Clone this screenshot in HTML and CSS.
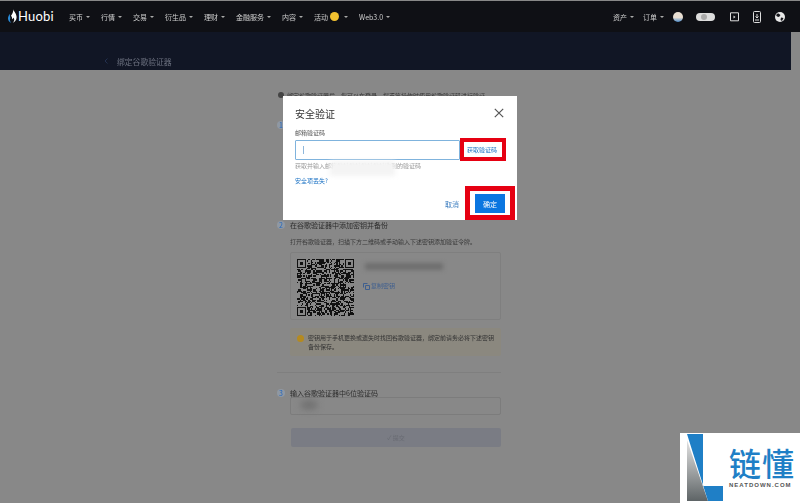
FILE: index.html
```html
<!DOCTYPE html>
<html lang="zh-CN">
<head>
<meta charset="utf-8">
<title>绑定谷歌验证器</title>
<link rel="stylesheet" href="styles.css">
</head>
<body>
<header class="nav">
  <div class="brand">
    <svg class="flame" width="9" height="14" viewBox="0 0 9 14"><path fill="#fff" d="M5 0c.6 2.4 3.6 4.300 3.600 8.300 0 2.800-1.800 4.900-3.800 5.500 1.600-1.300 1.900-3.400.8-5.200-.4 1-1 1.400-1.600 1.700.3-1.500-.2-2.800-1-3.600C4.800 4.300 5.600 2.400 5 0z"/><path fill="#2a8bd8" d="M2.200 4.800C.8 6.300 0 7.700 0 9.500c0 2.200 1.500 3.800 3.300 4.300C1.900 12.500 1.500 10.800 2.400 9 1.800 7.500 1.700 6.200 2.200 4.800z"/></svg>
    <span class="brand-name">Huobi</span>
  </div>
  <nav class="menu">
    <a class="m">买币</a><a class="m">行情</a><a class="m">交易</a><a class="m">衍生品</a><a class="m">理财</a><a class="m">金融服务</a><a class="m">内容</a>
    <a class="m m-activity">活动<i class="coin"></i></a><a class="m">Web3.0</a>
  </nav>
  <div class="nav-right">
    <a class="m">资产</a><a class="m">订单</a>
    <i class="avatar"></i>
    <i class="toggle"><b></b></i>
    <svg class="ico" width="10" height="10" viewBox="0 0 10 10"><path fill="none" stroke="#ddd" d="M1.500.8h8v8h-8z"/><path fill="#ddd" d="M4.500 3.500 6.500 5 4.500 6.500z"/></svg>
    <svg class="ico" width="8" height="12" viewBox="0 0 8 12"><rect x=".5" y=".5" width="7" height="11" rx="1" fill="none" stroke="#ddd"/><path stroke="#ddd" fill="none" d="M4 3v4M2.500 5.500 4 7l1.500-1.500M2 9h4"/></svg>
    <svg class="ico" width="10" height="10" viewBox="0 0 10 10"><circle cx="5" cy="5" r="5" fill="#e8e8e8"/><path fill="#15161b" d="M3 1.200 5.500 3 4 5 2 4.500 1 3zM6 5.500 8.500 6 7 9 5.500 8z"/></svg>
  </div>
</header>

<div class="banner"><svg class="banner-arrow" width="4" height="6" viewBox="0 0 4 6"><path fill="none" stroke="#23304f" d="M3.500.5 1 3l2.500 2.500"/></svg><span class="banner-title">绑定谷歌验证器</span></div>

<main class="content">
  <p class="tip"><i class="dot"></i>绑定谷歌验证器后，您可以在登录、提币等操作时使用谷歌验证码进行验证。</p>
  <h2 class="step step-one"><i class="num">1</i></h2>
  <h2 class="step step-two"><i class="num">2</i>在谷歌验证器中添加密钥并备份</h2>
  <p class="desc">打开谷歌验证器，扫描下方二维码或手动输入下述密钥添加验证令牌。</p>
  <section class="card">
    <svg id="qr" class="qr" width="57" height="57" viewBox="0 0 45 45" shape-rendering="crispEdges"></svg>
    <div class="secret">
      <div class="secret-key"></div>
      <a class="copy"><svg width="7" height="7" viewBox="0 0 7 7"><path fill="none" stroke="#3f5f8f" d="M2.500 2.500h4v4h-4zM.5 4.500v-4h4"/></svg>复制密钥</a>
    </div>
  </section>
  <section class="warn"><i class="warn-dot"></i><p>密钥用于手机更换或遗失时找回谷歌验证器，绑定前请务必将下述密钥备份保存。</p></section>
  <hr class="rule">
  <h2 class="step step-three"><i class="num">3</i>输入谷歌验证器中6位验证码</h2>
  <div class="code-input"><i class="smudge"></i></div>
  <div class="submit">✓ 提交</div>
</main>

<div class="modal">
  <div class="modal-head"><span class="modal-title">安全验证</span>
    <svg class="close" width="10" height="10" viewBox="0 0 10 10"><path stroke="#555" stroke-width="1.200" d="M.8.8l8.400 8.400M9.200.8.800 9.200"/></svg>
  </div>
  <label class="label">邮箱验证码</label>
  <div class="field"><i class="caret"></i><a class="get-code">获取验证码</a></div>
  <p class="hint">获取并输入邮箱地址地址地址地址收到的验证码</p>
  <a class="lost">安全项丢失?</a>
  <div class="actions"><a class="cancel">取消</a><button class="ok">确定</button></div>
  <i class="patch"></i>
  <i class="mark mark-code"></i>
  <i class="mark mark-ok"></i>
</div>

<aside class="watermark">
  <svg class="wm-logo" width="37" height="68" viewBox="0 0 37 68">
    <defs><linearGradient id="wmg" x1="0" y1="0" x2="0" y2="1"><stop offset="0" stop-color="#e4e4e4"/><stop offset="1" stop-color="#5e6466"/></linearGradient></defs>
    <path fill="url(#wmg)" d="M0 6 0 67H21z"/>
    <path fill="#1f7fc6" d="M0 0H16V52H36V67H21z"/>
  </svg>
  <div class="wm-text"><div class="wm-cn">链懂</div><div class="wm-en">NEATDOWN.COM</div></div>
</aside>
<script src="script.js"></script>
</body>
</html>
```
FILE: styles.css
```css
* { box-sizing: border-box; }
html, body { margin: 0; height: 503px; overflow: hidden; }
body { background: #888; font-family: "Noto Sans CJK SC", "Liberation Sans", sans-serif; color: #2b2b2b; position: relative; padding-top: 1px; }
i { display: block; font-style: normal; }
p, h2 { margin: 0; font-weight: 400; }

.nav { height: 31px; background: #0f1015; display: flex; align-items: center; padding-left: 8px; color: #cfcfcf; }
.brand { display: flex; align-items: center; gap: 1px; width: 61px; margin-top: -2px; }
.brand-name { font: 400 13px Lato, sans-serif; color: #fff; letter-spacing: 0.2px; }
.menu { display: flex; align-items: center; gap: 11px; }
.m { font-size: 7px; line-height: 12px; display: flex; align-items: center; filter: blur(0.3px); white-space: nowrap; }
.m::after { content: ""; margin-left: 3px; border: 2px solid transparent; border-top: 2px solid #aaa; border-bottom: 0; }
.m-activity::after { margin-left: 5px; }
.coin { width: 9px; height: 9px; border-radius: 50%; background: #f2c230; margin-left: 2px; }
.nav-right { margin-left: auto; display: flex; align-items: center; gap: 13px; padding-right: 15px; }
.nav-right .m { margin-right: -4px; }
.avatar { width: 10px; height: 10px; border-radius: 50%; background: linear-gradient(#e8ded2 55%, #4a89c8); }
.toggle { width: 19px; height: 8px; border-radius: 4px; background: #ddd; }
.toggle b { display: block; width: 6px; height: 6px; margin: 1px 0 0 5px; border-radius: 50%; background: #aaa; }
.ico { display: block; margin-left: 1px; }

.banner { width: 791px; height: 38px; background: #111625; display: flex; align-items: center; gap: 9px; padding: 20px 0 0 104px; color: #6d7280; font-size: 7.800px; }
.banner-title { filter: blur(0.3px); }

.content { width: 224px; margin-left: 277px; position: relative; font-size: 6px; color: #333; filter: blur(0.3px); }
.tip { display: flex; align-items: center; gap: 3px; height: 12px; margin-top: 19px; white-space: nowrap; }
.dot { width: 6px; height: 6px; margin-left: 1px; border-radius: 50%; background: #444; flex: none; }
.step { display: flex; align-items: center; gap: 5px; font-size: 7px; height: 12px; color: #2e2e2e; white-space: nowrap; }
.num { width: 8px; height: 8px; border-radius: 50%; background: #8f98a3; color: #2467bd; font-size: 7px; line-height: 8px; text-align: center; }
.step-one { margin-top: 18px; }
.step-two { margin-top: 88px; }
.desc { margin: 5px 0 0 13px; height: 12px; line-height: 12px; white-space: nowrap; color: #3a3a3a; }
.card { margin: 4px 0 0 13px; width: 211px; height: 68px; border: 1px solid #7f7f7f; border-radius: 2px; display: flex; padding: 6px; gap: 9px; }
.qr { display: block; flex: none; }
.secret { padding-top: 4px; }
.secret-key { width: 78px; height: 7px; background: #6e6e6e; filter: blur(2px); margin-left: 2px; }
.copy { display: flex; align-items: center; gap: 1px; color: #3f5f8f; margin-top: 11px; line-height: 10px; }
.warn { margin: 8px 0 0 13px; width: 211px; height: 28px; background: #8b887f; border-radius: 2px; display: flex; gap: 4px; padding: 4px 2px 0 7px; line-height: 9px; color: #333; }
.warn p { width: 186px; padding-top: 1px; }
.warn-dot { width: 7px; height: 7px; margin-top: 3px; border-radius: 50%; background: #b48a20; flex: none; }
.rule { border: 0; height: 1px; background: #7f7f7f; margin: 16px 0 0 0; }
.step-three { margin-top: 14px; }
.code-input { margin: -2px 0 0 13px; width: 211px; height: 18px; border: 1px solid #7c7c7c; border-radius: 2px; }
.smudge { width: 18px; height: 10px; margin: 2px 0 0 9px; background: #727272; border-radius: 50%; filter: blur(3px); }
.submit { margin: 13px 0 0 14px; width: 210px; height: 19px; background: #7a7c84; border-radius: 2px; text-align: center; line-height: 19px; color: #686a72; }

.modal { position: absolute; left: 283px; top: 96px; width: 234px; height: 124px; background: #fff; padding: 0 12px; filter: blur(0.3px); }
.modal-head { display: flex; justify-content: space-between; align-items: center; height: 34px; padding-right: 1px; }
.modal-title { font-size: 10px; color: #333; }
.label { display: block; font-size: 6px; line-height: 8px; margin-top: -1px; color: #555; }
.field { margin-top: 3px; width: 165px; height: 20px; border: 1px solid #7fb3dd; border-radius: 1px; position: relative; }
.caret { position: absolute; left: 7px; top: 5px; width: 1px; height: 8px; background: #8fb8dc; }
.get-code { position: absolute; left: 171px; top: 4px; width: 32px; font-size: 6px; line-height: 10px; color: #1b72c4; white-space: nowrap; }
.hint { font-size: 6px; line-height: 8px; margin-top: 2px; color: #999; white-space: nowrap; }
.lost { display: block; font-size: 6px; line-height: 8px; margin-top: 7px; color: #1b72c4; }
.actions { position: absolute; right: 12px; top: 98px; display: flex; align-items: center; gap: 16px; }
.cancel { font-size: 7px; color: #3f7fc0; }
.ok { width: 30px; height: 19px; background: #0b76e0; border: 0; padding: 0; color: #fff; font: 7px "Noto Sans CJK SC", sans-serif; }
.patch { position: absolute; left: 47px; top: 65px; width: 65px; height: 15px; background: #f4f4f4; filter: blur(2px); }
.mark { position: absolute; border: 4px solid #e60012; }
.mark-code { left: 177px; top: 42px; width: 46px; height: 23px; }
.mark-ok { left: 182px; top: 90px; width: 50px; height: 34px; border-width: 5px; }

.watermark { position: absolute; right: 0; bottom: 0; width: 120px; height: 70px; background: #fff; display: flex; padding: 1px 0 0 7px; gap: 5px; }
.wm-logo { flex: none; display: block; }
.wm-text { padding-top: 12px; }
.wm-cn { font: 500 32px/33px "Noto Sans CJK SC", sans-serif; color: #1f7fc6; white-space: nowrap; letter-spacing: 1px; }
.wm-en { font: 700 6px/8px "Liberation Sans", sans-serif; color: #555; letter-spacing: 1px; white-space: nowrap; margin-top: 2px; }
```
FILE: script.js
```js
(function () {
  var svg = document.getElementById("qr");
  var n = 45, seed = 7, d = "";
  function rnd() { seed = (seed * 16807) % 2147483647; return seed / 2147483647; }
  function finder(x, y) { return x >= 0 && y >= 0 && x < 8 && y < 8; }
  for (var y = 0; y < n; y++) for (var x = 0; x < n; x++) {
    if (finder(x, y) || finder(x - n + 8, y) || finder(x, y - n + 8)) continue;
    if (rnd() > 0.5) d += "M" + x + " " + y + "h1v1h-1z";
  }
  [[0, 0], [38, 0], [0, 38]].forEach(function (p) {
    d += "M" + p[0] + " " + p[1] + "h7v7h-7zM" + (p[0] + 1) + " " + (p[1] + 1) + "v5h5v-5zM" + (p[0] + 2) + " " + (p[1] + 2) + "h3v3h-3z";
  });
  var path = document.createElementNS("http://www.w3.org/2000/svg", "path");
  path.setAttribute("d", d);
  path.setAttribute("fill", "#111");
  path.setAttribute("fill-rule", "evenodd");
  svg.appendChild(path);
})();
```
